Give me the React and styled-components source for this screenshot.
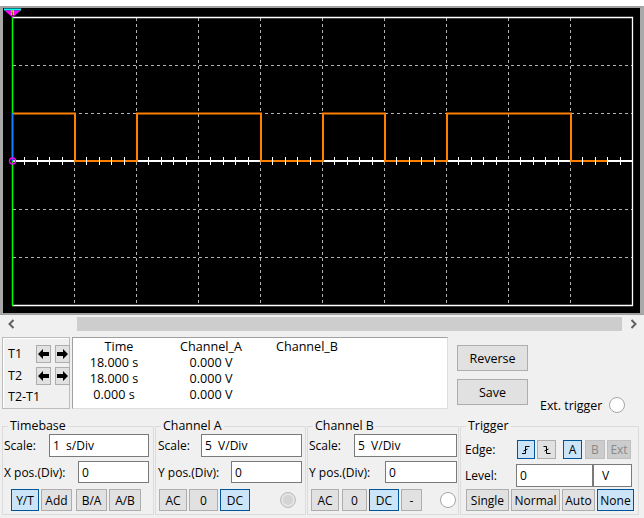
import React from "react";
import styled, { createGlobalStyle, css } from "styled-components";

const GlobalStyle = createGlobalStyle`
  html, body { margin: 0; padding: 0; background: #f0f0f0; }
  body {
    font-family: "Open Sans", "Liberation Sans", sans-serif;
    font-size: 12px;
    color: #000;
  }
  * { box-sizing: border-box; }
`;

const Window = styled.div`
  width: 644px;
  height: 518px;
  background: #f0f0f0;
  display: flex;
  flex-direction: column;
  overflow: hidden;
`;

const TopStrip = styled.div`
  height: 6px;
  background: #ffffff;
`;

const Screen = styled.div`
  height: 309px;
  background: #000;
  border-top: 2px solid #a0a0a0;
  border-bottom: 2px solid #a0a0a0;
  border-left: 3px solid #a9a9a9;
  border-right: 4px solid #a9a9a9;
  svg {
    display: block;
  }
`;

const ScrollBar = styled.div`
  height: 18px;
  display: flex;
  align-items: center;
`;

const ScrollArrow = styled.div`
  width: 22px;
  height: 18px;
  display: flex;
  align-items: center;
  justify-content: center;
`;

const ScrollTrack = styled.div`
  flex: 1;
  height: 18px;
  display: flex;
  align-items: center;
`;

const Thumb = styled.div`
  flex: 1;
  height: 14px;
  margin-left: ${(p) => p.$offset}px;
  background: #cdcdcd;
`;

const Panel = styled.div`
  flex: 1;
  display: flex;
  flex-direction: column;
  padding-left: 2px;
`;

const TopRow = styled.div`
  display: flex;
  align-items: flex-start;
  height: 72px;
  margin-top: 4px;
`;

const CursorBox = styled.div`
  width: 68px;
  height: 72px;
  border: 1px solid #bcbcbc;
  box-shadow: inset 1px 1px 0 #ffffff;
  display: grid;
  grid-template-columns: 24px 15px 15px;
  grid-template-rows: 18px 18px 16px;
  column-gap: 4px;
  row-gap: 4px;
  padding: 7px 0 0 5px;
  align-items: center;
  font-size: 12.5px;
`;

const CursorLabel = styled.span`
  line-height: 16px;
  white-space: nowrap;
  grid-column: ${(p) => (p.$wide ? "1 / 4" : "auto")};
`;

const ArrowBtn = styled.div`
  width: 15px;
  height: 18px;
  background: #e1e1e1;
  border: 1px solid #adadad;
  display: flex;
  align-items: center;
  justify-content: center;
`;

const Readout = styled.div`
  width: 376px;
  height: 72px;
  margin-left: 2px;
  background: #fff;
  border: 1px solid;
  border-color: #a0a0a0 #dedede #dedede #a0a0a0;
  padding-top: 1px;
  display: grid;
  grid-template-columns: 82px 112px 80px;
  grid-auto-rows: 16px;
  align-content: start;
  font-size: 12.6px;
`;

const Cell = styled.div`
  text-align: center;
  line-height: 16px;
  white-space: nowrap;
  padding-left: ${(p) => p.$pl || 0}px;
`;

const ActionCol = styled.div`
  display: flex;
  flex-direction: column;
  gap: 8px;
  margin: 8px 0 0 9px;
`;

const ActionBtn = styled.button`
  width: 71px;
  height: 26px;
  padding: 0;
  font: inherit;
  font-size: 12.5px;
  color: #000;
  background: #e1e1e1;
  border: 1px solid #adadad;
`;

const ExtTrigger = styled.div`
  display: flex;
  align-items: center;
  gap: 7px;
  height: 16px;
  margin: 60px 0 0 12px;
  white-space: nowrap;
  font-size: 12.4px;
`;

const Radio = styled.span`
  width: 16px;
  height: 16px;
  flex-shrink: 0;
  border-radius: 50%;
  border: 1px solid ${(p) => (p.$dim ? "#bdbdbd" : "#a6a6a6")};
  background: ${(p) => (p.$dim ? "#d4d4d4" : "#ffffff")};
  box-shadow: ${(p) => (p.$dim ? "inset 0 0 0 2px #e4e4e4" : "none")};
  margin-left: ${(p) => (p.$push ? "auto" : "0")};
  margin-right: ${(p) => p.$mr || 0}px;
`;

const GroupRow = styled.div`
  display: flex;
  gap: 1px;
  margin-top: 10px;
`;

const Group = styled.fieldset`
  margin: 0;
  padding: 0;
  min-width: 0;
  width: ${(p) => p.$w}px;
  height: 96px;
  border: 1px solid #dcdcdc;
`;

const Legend = styled.legend`
  margin-left: 5px;
  padding: 0 2px;
  line-height: 14px;
  font-size: 12.4px;
`;

const GroupBody = styled.div`
  display: flex;
  flex-direction: column;
  padding: ${(p) => p.$pad};
`;

const Row = styled.div`
  display: flex;
  align-items: center;
  height: ${(p) => p.$h}px;
  margin-top: ${(p) => p.$mt || 0}px;
  justify-content: ${(p) => (p.$spread ? "space-between" : "flex-start")};
`;

const Label = styled.span`
  white-space: nowrap;
  width: ${(p) => (p.$w ? `${p.$w}px` : "auto")};
  flex-shrink: 0;
`;

const Field = styled.input`
  width: ${(p) => p.$w}px;
  height: 100%;
  padding: 0 0 0 ${(p) => p.$pl ?? 3}px;
  font: inherit;
  color: #000;
  background: #fff;
  border: 1px solid #7a7a7a;
  outline: none;
  white-space: pre;
  flex-shrink: 0;
`;

const Btn = styled.button`
  width: ${(p) => p.$w}px;
  height: 100%;
  margin-left: ${(p) => p.$ml || 0}px;
  padding: 0;
  font: inherit;
  color: #000;
  background: #e1e1e1;
  border: 1px solid #adadad;
  display: flex;
  align-items: center;
  justify-content: center;
  flex-shrink: 0;
  ${(p) =>
    p.$on &&
    css`
      background: #cce4f7;
      border-color: #005499;
    `}
  ${(p) =>
    p.$off &&
    css`
      background: #cccccc;
      border-color: #bfbfbf;
      color: #8a8a8a;
    `}
`;

// scope drawing
const VX = [74, 136, 198, 260, 322, 384, 446, 508, 570];
const HY = [65, 113, 209, 257];
const TICKS = Array.from({ length: 49 }, (_, i) => i + 1).filter((k) => k % 5 !== 0);

function ScopeGraph() {
  return (
    <svg width="637" height="305" viewBox="3 8 637 305">
      {VX.map((x) => (
        <line key={"v" + x} x1={x + 0.5} y1="18" x2={x + 0.5} y2="305" stroke="#b4b4b4" strokeDasharray="3 3" />
      ))}
      {HY.map((y) => (
        <line key={"h" + y} x1="13" y1={y + 0.5} x2="632" y2={y + 0.5} stroke="#b4b4b4" strokeDasharray="3 3" />
      ))}
      <path d="M12 17.5 H632.5 V305.5 H12" fill="none" stroke="#fff" strokeWidth="1.3" />
      <line x1="12" y1="161" x2="633" y2="161" stroke="#fff" strokeWidth="2" />
      {TICKS.map((k) => {
        const x = Math.round(12 + k * 12.4) + 0.5;
        return <line key={k} x1={x} y1="157" x2={x} y2="165" stroke="#fff" strokeWidth="1" />;
      })}
      <path
        d="M12 113.5 H75 V161 H137 V113.5 H261 V161 H323 V113.5 H385 V161 H447 V113.5 H571 V161 H608"
        fill="none"
        stroke="#ff7f00"
        strokeWidth="2"
      />
      {TICKS.filter((k) => {
        const x = 12 + k * 12.4;
        return (x > 75 && x < 136) || (x > 261 && x < 322) || (x > 385 && x < 446) || (x > 571 && x < 608);
      }).map((k) => {
        const x = Math.round(12 + k * 12.4) + 0.5;
        return <line key={"o" + k} x1={x} y1="157" x2={x} y2="165" stroke="#fff" strokeWidth="1" />;
      })}
      <line x1="12.5" y1="17" x2="12.5" y2="306" stroke="#00ff00" strokeWidth="1.5" />
      <line x1="12.5" y1="113" x2="12.5" y2="161" stroke="#1080ff" strokeWidth="1.5" />
      <circle cx="12.5" cy="161" r="3" fill="none" stroke="#ff00ff" strokeWidth="1.3" />
      <rect x="4" y="8.5" width="17" height="2" fill="#00ffff" />
      <polygon points="4.5,10.5 20.5,10.5 12.5,17.5" fill="#ff00ff" />
      <rect x="11" y="10.5" width="3" height="5" fill="#ffe400" />
      <text x="12.5" y="15.5" fontSize="6" fontFamily="DejaVu Sans, sans-serif" textAnchor="middle" fill="#000">
        1
      </text>
    </svg>
  );
}

const Chevron = ({ dir }) => (
  <svg width="7" height="10" viewBox="0 0 7 10">
    <polyline
      points={dir === "left" ? "5.5,1 1.5,5 5.5,9" : "1.5,1 5.5,5 1.5,9"}
      fill="none"
      stroke="#606060"
      strokeWidth="2"
    />
  </svg>
);

const BoldArrow = ({ dir }) => (
  <svg width="11" height="10" viewBox="0 0 11 10">
    <polygon
      points={dir === "left" ? "0,5 5,0 5,3 11,3 11,7 5,7 5,10" : "11,5 6,0 6,3 0,3 0,7 6,7 6,10"}
      fill="#000"
    />
  </svg>
);

const EdgeIcon = ({ falling }) => (
  <svg width="10" height="10" viewBox="0 0 10 10">
    <path
      d={falling ? "M1.5 1.5 H4.5 V8.5 H8.5 M2.5 6 L6.5 4" : "M1 8.5 H4.5 V1.5 H8.5 M2.5 6 L6.5 4"}
      fill="none"
      stroke="#000"
      strokeWidth="1"
    />
  </svg>
);

const readings = [
  ["18.000 s", "0.000 V", ""],
  ["18.000 s", "0.000 V", ""],
  ["0.000 s", "0.000 V", ""],
];

export default function App() {
  return (
    <Window>
      <GlobalStyle />
      <TopStrip />
      <Screen>
        <ScopeGraph />
      </Screen>
      <ScrollBar>
        <ScrollArrow>
          <Chevron dir="left" />
        </ScrollArrow>
        <ScrollTrack>
          <Thumb $offset={55} />
        </ScrollTrack>
        <ScrollArrow>
          <Chevron dir="right" />
        </ScrollArrow>
      </ScrollBar>

      <Panel>
        <TopRow>
          <CursorBox>
            <CursorLabel>T1</CursorLabel>
            <ArrowBtn>
              <BoldArrow dir="left" />
            </ArrowBtn>
            <ArrowBtn>
              <BoldArrow dir="right" />
            </ArrowBtn>
            <CursorLabel>T2</CursorLabel>
            <ArrowBtn>
              <BoldArrow dir="left" />
            </ArrowBtn>
            <ArrowBtn>
              <BoldArrow dir="right" />
            </ArrowBtn>
            <CursorLabel $wide>T2-T1</CursorLabel>
          </CursorBox>

          <Readout>
            <Cell $pl={10}>Time</Cell>
            <Cell>Channel_A</Cell>
            <Cell>Channel_B</Cell>
            {readings.map((r, i) =>
              r.map((v, j) => <Cell key={i + "-" + j}>{v}</Cell>)
            )}
          </Readout>

          <ActionCol>
            <ActionBtn>Reverse</ActionBtn>
            <ActionBtn>Save</ActionBtn>
          </ActionCol>

          <ExtTrigger>
            Ext. trigger
            <Radio />
          </ExtTrigger>
        </TopRow>

        <GroupRow>
          <Group $w={152}>
            <Legend>Timebase</Legend>
            <GroupBody $pad="1px 4px 0 1px">
              <Row $h={23} $spread>
                <Label>Scale:</Label>
                <Field $w={100} readOnly value="1  s/Div" />
              </Row>
              <Row $h={22} $mt={4} $spread>
                <Label>X pos.(Div):</Label>
                <Field $w={71} readOnly value="0" />
              </Row>
              <Row $h={22} $mt={6}>
                <Btn $w={28} $ml={7} $on>Y/T</Btn>
                <Btn $w={31} $ml={2}>Add</Btn>
                <Btn $w={31} $ml={4}>B/A</Btn>
                <Btn $w={32} $ml={2}>A/B</Btn>
              </Row>
            </GroupBody>
          </Group>

          <Group $w={151}>
            <Legend>Channel A</Legend>
            <GroupBody $pad="1px 3px 0 2px">
              <Row $h={23} $spread>
                <Label>Scale:</Label>
                <Field $w={101} readOnly value="5  V/Div" />
              </Row>
              <Row $h={22} $mt={4} $spread>
                <Label>Y pos.(Div):</Label>
                <Field $w={71} readOnly value="0" />
              </Row>
              <Row $h={22} $mt={6}>
                <Btn $w={28} $ml={1}>AC</Btn>
                <Btn $w={29} $ml={2}>0</Btn>
                <Btn $w={30} $ml={2} $on>DC</Btn>
                <Radio $dim $push $mr={6} />
              </Row>
            </GroupBody>
          </Group>

          <Group $w={152}>
            <Legend>Channel B</Legend>
            <GroupBody $pad="1px 1px 0 1px">
              <Row $h={23} $spread>
                <Label>Scale:</Label>
                <Field $w={103} readOnly value="5  V/Div" />
              </Row>
              <Row $h={22} $mt={4} $spread>
                <Label>Y pos.(Div):</Label>
                <Field $w={72} readOnly value="0" />
              </Row>
              <Row $h={22} $mt={6}>
                <Btn $w={28} $ml={2}>AC</Btn>
                <Btn $w={25} $ml={3}>0</Btn>
                <Btn $w={30} $ml={2} $on>DC</Btn>
                <Btn $w={21} $ml={2}>-</Btn>
                <Radio $push $mr={1} />
              </Row>
            </GroupBody>
          </Group>

          <Group $w={179}>
            <Legend>Trigger</Legend>
            <GroupBody $pad="0 0 0 4px">
              <Row $h={19} $mt={7}>
                <Label $w={52}>Edge:</Label>
                <Btn $w={18} $on>
                  <EdgeIcon />
                </Btn>
                <Btn $w={19} $ml={2}>
                  <EdgeIcon falling />
                </Btn>
                <Btn $w={19} $ml={7} $on>A</Btn>
                <Btn $w={20} $ml={3} $off>B</Btn>
                <Btn $w={24} $ml={2} $off>Ext</Btn>
              </Row>
              <Row $h={23} $mt={5}>
                <Label $w={51}>Level:</Label>
                <Field $w={77} readOnly value="0" />
                <Field $w={39} $pl={8} readOnly value="V" />
              </Row>
              <Row $h={22} $mt={2}>
                <Btn $w={43} $ml={1}>Single</Btn>
                <Btn $w={49} $ml={2}>Normal</Btn>
                <Btn $w={33} $ml={2}>Auto</Btn>
                <Btn $w={37} $ml={2} $on>None</Btn>
              </Row>
            </GroupBody>
          </Group>
        </GroupRow>
      </Panel>
    </Window>
  );
}
